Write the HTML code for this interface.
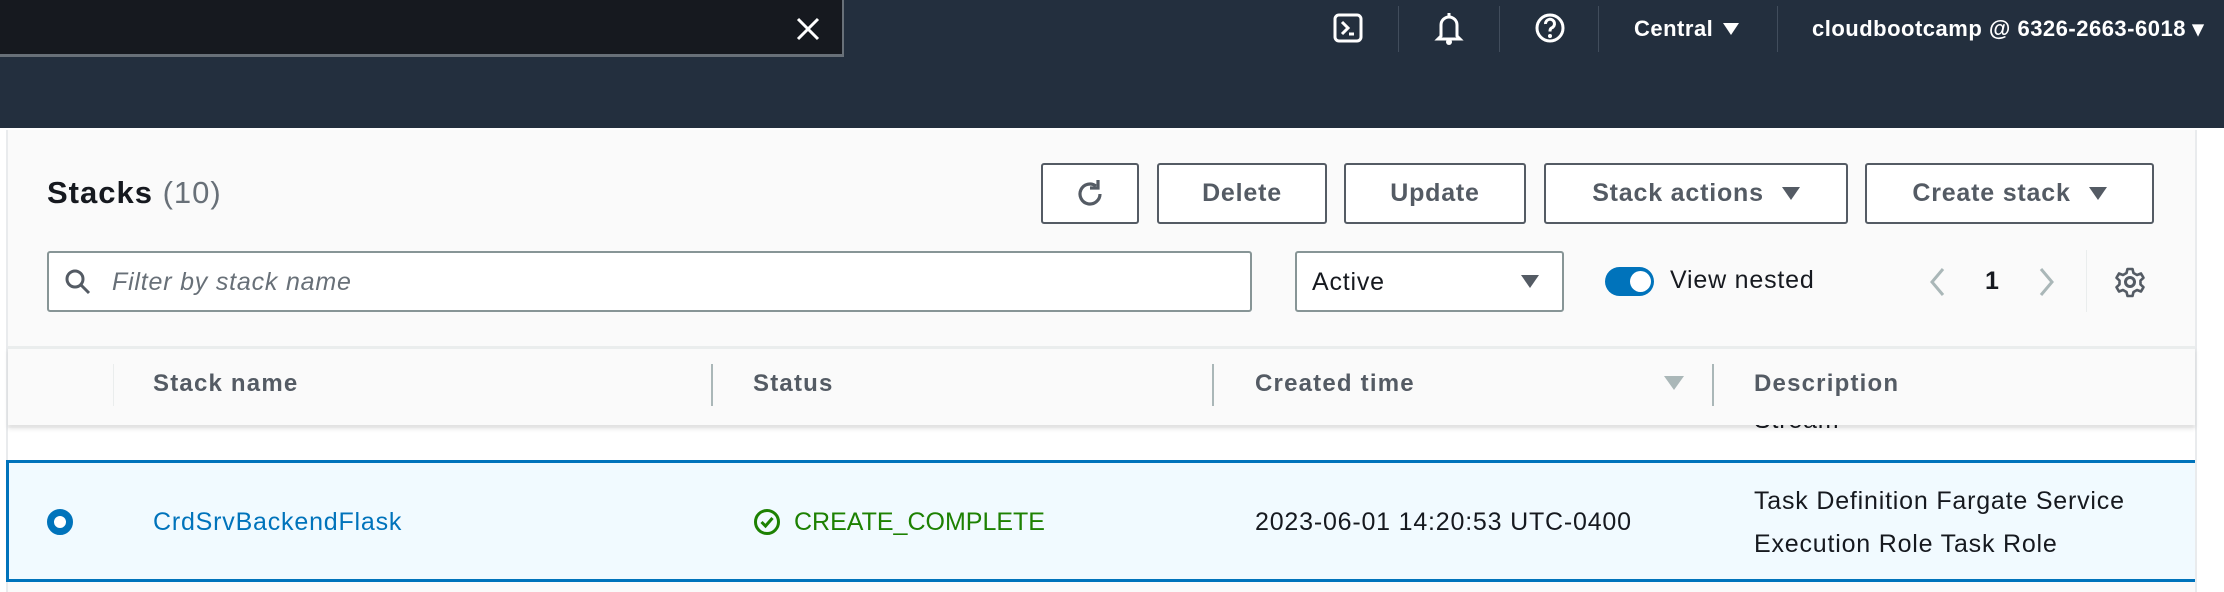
<!DOCTYPE html>
<html><head><style>
*{box-sizing:border-box;margin:0;padding:0}
body{width:2224px;height:592px;overflow:hidden;background:#fff;font-family:"Liberation Sans",sans-serif;position:relative}
.a{position:absolute}
.top{left:0;top:0;width:2224px;height:128px;background:#232f3e}
.search{left:0;top:0;width:844px;height:57px;background:#16191f;border-right:2px solid #687078;border-bottom:3px solid #687078}
.nav{color:#fff;font-size:22px;font-weight:bold;top:16px;letter-spacing:0.5px}
.vd{width:1px;height:46px;background:#414d5c;top:6px}
.content{left:6px;top:130px;width:2189px;height:462px;background:#fafafa;border-left:2px solid #e9ebed}
.btn{top:163px;height:61px;border:2px solid #545b64;border-radius:3px;background:#fff;color:#545b64;font-weight:bold;font-size:25px;letter-spacing:0.8px;display:flex;align-items:center;justify-content:center;gap:18px}
.tri{width:0;height:0;border-left:9px solid transparent;border-right:9px solid transparent;border-top:13px solid #545b64}
.hd{top:370px;font-size:24px;font-weight:bold;color:#545b64;letter-spacing:1.2px}
.cd{width:2px;height:42px;background:#aab7b8;top:364px}
.txt{font-size:25px;color:#16191f;letter-spacing:0.8px}
</style></head><body>
<div class="a top"></div>
<div class="a search"></div>
<svg class="a" style="left:795px;top:16px" width="26" height="26" viewBox="0 0 26 26"><path d="M3 3L23 23M23 3L3 23" stroke="#fff" stroke-width="3"/></svg>
<svg class="a" style="left:1332px;top:12px" width="32" height="32" viewBox="0 0 32 32"><rect x="3" y="3" width="26" height="26" rx="4" fill="none" stroke="#fff" stroke-width="3"/><path d="M10 10l6 6-6 6M17 22h5" stroke="#fff" stroke-width="3" fill="none"/></svg>
<div class="a vd" style="left:1398px"></div>
<svg class="a" style="left:1433px;top:10px" width="32" height="36" viewBox="0 0 32 36"><path d="M16 3v3M8 26V15a8 8 0 0 1 16 0v11l3 3H5z" fill="none" stroke="#fff" stroke-width="3"/><circle cx="16" cy="32" r="3" fill="#fff"/></svg>
<div class="a vd" style="left:1499px"></div>
<svg class="a" style="left:1534px;top:12px" width="32" height="32" viewBox="0 0 32 32"><circle cx="16" cy="16" r="13" fill="none" stroke="#fff" stroke-width="3"/><path d="M11.5 12a4.5 4.5 0 1 1 6 4c-1.5 .7-1.5 2-1.5 3.5" fill="none" stroke="#fff" stroke-width="3"/><circle cx="16" cy="24" r="2" fill="#fff"/></svg>
<div class="a vd" style="left:1598px"></div>
<div class="a nav" style="left:1634px">Central</div>
<div class="a" style="left:1723px;top:23px;border-left:8px solid transparent;border-right:8px solid transparent;border-top:12px solid #fff"></div>
<div class="a vd" style="left:1777px"></div>
<div class="a nav" style="left:1812px;white-space:nowrap">cloudbootcamp @ 6326-2663-6018 ▾</div>

<div class="a content"></div>
<div class="a" style="left:2195px;top:130px;width:29px;height:462px;background:#fff;border-left:2px solid #e9ebed"></div>
<div class="a" style="left:47px;top:175px;font-size:31px;font-weight:bold;color:#16191f;letter-spacing:1px">Stacks <span style="font-weight:normal;color:#687078">(10)</span></div>

<div class="a btn" style="left:1041px;width:98px"><svg width="34" height="34" viewBox="0 0 34 34"><path d="M27 17a10 10 0 1 1-4-8" fill="none" stroke="#545b64" stroke-width="3.2"/><path d="M25 3v8h-8" fill="none" stroke="#545b64" stroke-width="3.2"/></svg></div>
<div class="a btn" style="left:1157px;width:170px">Delete</div>
<div class="a btn" style="left:1344px;width:182px">Update</div>
<div class="a btn" style="left:1544px;width:304px">Stack actions<span class="tri"></span></div>
<div class="a btn" style="left:1865px;width:289px">Create stack<span class="tri"></span></div>

<div class="a" style="left:47px;top:251px;width:1205px;height:61px;background:#fff;border:2px solid #879596;border-radius:3px"></div>
<svg class="a" style="left:64px;top:268px" width="28" height="28" viewBox="0 0 28 28"><circle cx="11" cy="11" r="8" fill="none" stroke="#545b64" stroke-width="3"/><path d="M17 17l8 8" stroke="#545b64" stroke-width="3"/></svg>
<div class="a" style="left:112px;top:268px;font-size:25px;font-style:italic;color:#687078;letter-spacing:0.8px">Filter by stack name</div>
<div class="a" style="left:1295px;top:251px;width:269px;height:61px;background:#fff;border:2px solid #879596;border-radius:3px"></div>
<div class="a txt" style="left:1312px;top:268px">Active</div>
<div class="a" style="left:1521px;top:275px;border-left:9px solid transparent;border-right:9px solid transparent;border-top:13px solid #545b64"></div>
<div class="a" style="left:1605px;top:267px;width:49px;height:29px;border-radius:15px;background:#0073bb"></div>
<div class="a" style="left:1630px;top:271px;width:21px;height:21px;border-radius:50%;background:#fff"></div>
<div class="a txt" style="left:1670px;top:266px">View nested</div>
<svg class="a" style="left:1928px;top:266px" width="18" height="32" viewBox="0 0 18 32"><path d="M15 3L4 16l11 13" fill="none" stroke="#aab7b8" stroke-width="3"/></svg>
<div class="a txt" style="left:1985px;top:267px;font-weight:bold">1</div>
<svg class="a" style="left:2038px;top:266px" width="18" height="32" viewBox="0 0 18 32"><path d="M3 3l11 13L3 29" fill="none" stroke="#aab7b8" stroke-width="3"/></svg>
<div class="a" style="left:2086px;top:250px;width:1px;height:62px;background:#eaeded"></div>
<svg class="a" style="left:2114px;top:266px" width="32" height="32" viewBox="0 0 32 32"><circle cx="16" cy="16" r="4.5" fill="none" stroke="#545b64" stroke-width="3"/><path d="M13.5 3h5l1 4 3.5 2 4-1.5 2.5 4.3-3 2.8v3.8l3 2.8-2.5 4.3-4-1.5-3.5 2-1 4h-5l-1-4-3.5-2-4 1.5-2.5-4.3 3-2.8v-3.8l-3-2.8 2.5-4.3 4 1.5 3.5-2z" fill="none" stroke="#545b64" stroke-width="2.6" stroke-linejoin="round"/></svg>

<div class="a" style="left:8px;top:428px;width:2187px;height:33px;background:#fff"></div>
<div class="a txt" style="left:1754px;top:406px">Stream</div>
<div class="a" style="left:8px;top:346px;width:2187px;height:79px;background:#fafafa;border-top:3px solid #eaeded;box-shadow:0 4px 4px rgba(0,0,0,.1)"></div>
<div class="a" style="left:113px;top:364px;width:1px;height:42px;background:#eaeded"></div>
<div class="a cd" style="left:711px"></div>
<div class="a cd" style="left:1212px"></div>
<div class="a cd" style="left:1712px"></div>
<div class="a hd" style="left:153px">Stack name</div>
<div class="a hd" style="left:753px">Status</div>
<div class="a hd" style="left:1255px">Created time</div>
<div class="a" style="left:1664px;top:376px;border-left:10px solid transparent;border-right:10px solid transparent;border-top:14px solid #aab7b8"></div>
<div class="a hd" style="left:1754px">Description</div>

<div class="a" style="left:6px;top:460px;width:2189px;height:122px;background:#f1faff;border:3px solid #0073bb;border-right:none"></div>
<div class="a" style="left:47px;top:509px;width:26px;height:26px;border-radius:50%;border:7px solid #0073bb;background:#fff"></div>
<div class="a" style="left:153px;top:508px;font-size:25px;color:#0073bb;letter-spacing:0.8px">CrdSrvBackendFlask</div>
<svg class="a" style="left:753px;top:508px" width="28" height="28" viewBox="0 0 28 28"><circle cx="14" cy="14" r="11.5" fill="none" stroke="#1d8102" stroke-width="3"/><path d="M8.5 14l4 4 7-8" fill="none" stroke="#1d8102" stroke-width="3"/></svg>
<div class="a" style="left:794px;top:508px;font-size:25px;color:#1d8102">CREATE_COMPLETE</div>
<div class="a txt" style="left:1255px;top:508px">2023-06-01 14:20:53 UTC-0400</div>
<div class="a txt" style="left:1754px;top:480px;line-height:43px">Task Definition Fargate Service<br>Execution Role Task Role</div>
</body></html>
